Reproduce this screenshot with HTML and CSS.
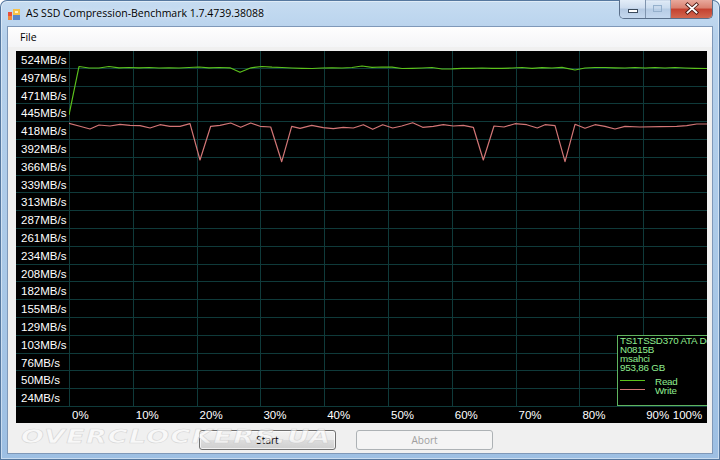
FILE: index.html
```html
<!DOCTYPE html>
<html lang="en">
<head>
    <meta charset="UTF-8">
    <title>AS SSD Compression-Benchmark</title>
    <link rel="stylesheet" href="styles.css">
</head>
<body>
    <div class="window">
        <div class="titlebar">
            <svg class="app-icon" width="12" height="12" viewBox="0 0 12 12">
                <rect x="0" y="3" width="4" height="4" fill="#e8503a"/>
                <rect x="0" y="7" width="4" height="4" fill="#f08a3c"/>
                <rect x="5" y="0" width="7" height="6" fill="#f6c14a"/>
                <rect x="5" y="6" width="7" height="5" fill="#5a86c8"/>
                <rect x="7" y="2" width="3" height="2" fill="#fff3c8"/>
            </svg>
            <span class="title">AS SSD Compression-Benchmark 1.7.4739.38088</span>
            <div class="caption-buttons">
                <span class="cap-btn cap-min">
                    <svg width="25" height="18" viewBox="0 0 25 18">
                        <rect x="8.5" y="9.5" width="9" height="3" fill="#fff" stroke="#3b4a5c"/>
                    </svg>
                </span>
                <span class="cap-btn cap-max">
                    <svg width="24" height="18" viewBox="0 0 24 18">
                        <rect x="7.5" y="5.5" width="8" height="6" fill="none" stroke="#8ea8c6"/>
                        <rect x="8" y="6" width="7" height="2" fill="#c9d9eb"/>
                    </svg>
                </span>
                <span class="cap-btn cap-close">
                    <svg width="41" height="18" viewBox="0 0 41 18">
                        <path d="M16.5 4.5 L25.5 12.5 M25.5 4.5 L16.5 12.5" stroke="#4a1a14" stroke-width="3.6" stroke-linecap="square"/>
                        <path d="M16.5 4.5 L25.5 12.5 M25.5 4.5 L16.5 12.5" stroke="#fff" stroke-width="1.8" stroke-linecap="square"/>
                    </svg>
                </span>
            </div>
        </div>

        <div class="client">
            <div class="menubar">
                <span class="menu-item">File</span>
            </div>

            <div class="chart">
                <div class="y-axis">
                    <div class="y-label">524MB/s</div>
                    <div class="y-label">497MB/s</div>
                    <div class="y-label">471MB/s</div>
                    <div class="y-label">445MB/s</div>
                    <div class="y-label">418MB/s</div>
                    <div class="y-label">392MB/s</div>
                    <div class="y-label">366MB/s</div>
                    <div class="y-label">339MB/s</div>
                    <div class="y-label">313MB/s</div>
                    <div class="y-label">287MB/s</div>
                    <div class="y-label">261MB/s</div>
                    <div class="y-label">234MB/s</div>
                    <div class="y-label">208MB/s</div>
                    <div class="y-label">182MB/s</div>
                    <div class="y-label">155MB/s</div>
                    <div class="y-label">129MB/s</div>
                    <div class="y-label">103MB/s</div>
                    <div class="y-label">76MB/s</div>
                    <div class="y-label">50MB/s</div>
                    <div class="y-label">24MB/s</div>
                </div>

                <div class="plot">
                    <svg class="plot-svg" width="638" height="356" viewBox="69 51 638 356">
                        <g class="grid" fill="#0f3a3a" shape-rendering="crispEdges">
                            <rect x="69" y="51" width="1" height="356"/>
                            <rect x="132.8" y="51" width="1" height="356"/>
                            <rect x="196.6" y="51" width="1" height="356"/>
                            <rect x="260.4" y="51" width="1" height="356"/>
                            <rect x="324.2" y="51" width="1" height="356"/>
                            <rect x="388" y="51" width="1" height="356"/>
                            <rect x="451.8" y="51" width="1" height="356"/>
                            <rect x="515.6" y="51" width="1" height="356"/>
                            <rect x="579.4" y="51" width="1" height="356"/>
                            <rect x="643.2" y="51" width="1" height="356"/>
                            <rect x="69" y="67.8" width="638" height="1"/>
                            <rect x="69" y="85.6" width="638" height="1"/>
                            <rect x="69" y="103.4" width="638" height="1"/>
                            <rect x="69" y="121.2" width="638" height="1"/>
                            <rect x="69" y="139" width="638" height="1"/>
                            <rect x="69" y="156.8" width="638" height="1"/>
                            <rect x="69" y="174.6" width="638" height="1"/>
                            <rect x="69" y="192.4" width="638" height="1"/>
                            <rect x="69" y="210.2" width="638" height="1"/>
                            <rect x="69" y="228" width="638" height="1"/>
                            <rect x="69" y="245.8" width="638" height="1"/>
                            <rect x="69" y="263.6" width="638" height="1"/>
                            <rect x="69" y="281.4" width="638" height="1"/>
                            <rect x="69" y="299.2" width="638" height="1"/>
                            <rect x="69" y="317" width="638" height="1"/>
                            <rect x="69" y="334.8" width="638" height="1"/>
                            <rect x="69" y="352.6" width="638" height="1"/>
                            <rect x="69" y="370.4" width="638" height="1"/>
                            <rect x="69" y="388.2" width="638" height="1"/>
                            <rect x="69" y="406" width="638" height="1"/>
                        </g>
                        <!-- write -->
                        <polyline class="line-write" points="69,123.3 79,126 90,129 99,125 110,126 120,124.3 130,125.3 140,125.7 150,128 160,124.7 170,126.3 180,126.3 190,123.7 200,160 210.7,126.3 220,125.3 230.7,123 240.7,127.3 250.7,123 260,126.3 270.7,127 281.7,161.7 291.7,126.3 300,128.3 311.7,125.3 323.3,127.7 333.3,128.7 343.3,127.3 353.3,128 363.3,124.7 372.7,129.3 382.7,124.7 392.7,128 401.7,126 412.7,122.7 422.7,127.3 433.3,126.3 443.3,124.7 453.3,126 463.3,125.3 473.3,127.3 483.3,160 494,126 504,127 515,123.7 526.7,124.7 537.3,128 545,124.7 555,125.7 565,161.7 575,124.3 585,128.3 595,124.7 605,126.3 615,129 625,126.3 640,127 660,126.7 676.7,126.3 686.7,125.7 696.7,124 707,124"/>
                        <!-- read -->
                        <polyline class="line-read" points="69,115 79,66.5 89,68 99,68 109,66.5 119,67.8 129,67.5 139,67.8 149,67.5 159,68 169,67.8 179,68 189,67.5 199,67 209,67.8 219,67.5 230,67.8 240,72.3 251,67.8 262,66.5 272,67.2 282,67.5 292,68 302,68.3 312,68.5 322,68 332,67.8 342,68 352,67.5 362,66 372,67.3 382,67 392,67.2 402,68.5 412,68.3 422,68 432,67.5 442,69 452,68.8 462,68.3 472,68.3 482,68 492,68.3 502,68.3 512,68 522,67.5 532,68.3 542,67.7 552,68 562,67.3 575,70 585,68 595,67.5 605,67.5 615,67.8 625,68 635,67.5 645,68 655,67.5 665,68 675,67.5 685,68 695,68.3 707,68.5"/>
                    </svg>

                    <div class="legend">
                        <div class="legend-text">TS1TSSD370 ATA Device</div>
                        <div class="legend-text">N0815B</div>
                        <div class="legend-text">msahci</div>
                        <div class="legend-text">953,86 GB</div>
                        <div class="legend-row legend-first">
                            <span class="swatch swatch-read"></span>
                            <span>Read</span>
                        </div>
                        <div class="legend-row">
                            <span class="swatch swatch-write"></span>
                            <span>Write</span>
                        </div>
                    </div>
                </div>

                <div class="x-axis">
                    <span class="x-label">0%</span>
                    <span class="x-label">10%</span>
                    <span class="x-label">20%</span>
                    <span class="x-label">30%</span>
                    <span class="x-label">40%</span>
                    <span class="x-label">50%</span>
                    <span class="x-label">60%</span>
                    <span class="x-label">70%</span>
                    <span class="x-label">80%</span>
                    <span class="x-label x-label-last">90%<span class="x-end">100%</span></span>
                </div>
            </div>

            <div class="actions">
                <button class="btn" type="button">Start</button>
                <button class="btn" type="button" disabled>Abort</button>
            </div>
        </div>

        <div class="watermark">OVERCLOCKERS.UA</div>
    </div>
</body>
</html>
```

FILE: styles.css
```css
body {
    margin: 0;
    font-family: "Liberation Sans", Arial, sans-serif;
    background: #ffffff;
}

.window {
    position: relative;
    width: 720px;
    height: 460px;
    box-sizing: border-box;
    padding: 0 7px 6px;
    display: flex;
    flex-direction: column;
    overflow: hidden;
    background: linear-gradient(to bottom, #c6dcf1 0%, #b6d1ec 8%, #a9c8e7 60%, #9dbfe3 100%);
    border-radius: 7px 7px 0 0;
    box-shadow: inset 0 0 0 1px #56789f, inset 0 0 0 2px rgba(255, 255, 255, 0.45);
}

/* title bar */

.titlebar {
    height: 26px;
    display: flex;
    align-items: center;
}

.app-icon {
    align-self: flex-start;
    margin: 9px 6px 0 1px;
}

.title {
    font-family: "Open Sans", "Noto Sans", sans-serif;
    font-size: 10.5px;
    color: #000;
    text-shadow: 0 0 6px rgba(255, 255, 255, 0.9);
}

.caption-buttons {
    align-self: flex-start;
    margin-left: auto;
    display: flex;
    height: 18px;
    border: 1px solid #5a6f8a;
    border-top: none;
    border-radius: 0 0 5px 5px;
    overflow: hidden;
}

.cap-btn {
    display: block;
    height: 18px;
}

.cap-btn svg {
    display: block;
}

.cap-min,
.cap-max {
    background: linear-gradient(to bottom, #e3edf8 0%, #cddcee 45%, #b4c9e2 50%, #c5d8ee 100%);
    border-right: 1px solid #7f94ae;
}

.cap-max {
    opacity: 0.85;
}

.cap-close {
    background: linear-gradient(to bottom, #e8a99c 0%, #d9806f 45%, #c4412f 50%, #d2674f 100%);
}

/* client area */

.client {
    flex: 1;
    display: flex;
    flex-direction: column;
    background: #f0f0f0;
    border: 1px solid #7f98b8;
}

.menubar {
    height: 20px;
    display: flex;
    align-items: center;
    background: linear-gradient(to bottom, #fefefe, #f4f5f7);
}

.menu-item {
    font-family: "Open Sans", "Noto Sans", sans-serif;
    font-size: 10.5px;
    color: #000;
    padding-left: 12px;
}

/* chart */

.chart {
    width: 691px;
    height: 372px;
    margin: 4px 0 0 8px;
    background: #000;
    display: grid;
    grid-template-columns: 53px 638px;
    grid-template-rows: 356px 16px;
    color: #fff;
    font-size: 11.5px;
}

.y-label {
    height: 17.8px;
    box-sizing: border-box;
    border-bottom: 1px solid #0f3a3a;
    padding: 2px 0 0 5px;
    line-height: 15.8px;
    white-space: nowrap;
}

.plot {
    position: relative;
    overflow: hidden;
}

.plot-svg {
    display: block;
}

.line-read,
.line-write {
    fill: none;
    stroke-width: 1.2;
    stroke-linejoin: round;
}

.line-read {
    stroke: #5cc21c;
}

.line-write {
    stroke: #d27676;
}

.legend {
    position: absolute;
    left: 548px;
    top: 284px;
    width: 120px;
    height: 69px;
    border: 1px solid #5fb45f;
    background: #000;
    color: #90ee90;
    font-size: 9.8px;
    letter-spacing: -0.2px;
    padding-left: 2px;
}

.legend-text {
    line-height: 9px;
    white-space: nowrap;
}

.legend-row {
    display: flex;
    align-items: center;
    height: 9px;
    line-height: 9px;
}

.legend-first {
    margin-top: 5px;
}

.swatch {
    width: 25px;
    height: 1px;
    margin-right: 10px;
    position: relative;
    top: -1px;
}

.swatch-read {
    background: #5cc21c;
}

.swatch-write {
    background: #d27676;
}

.x-axis {
    grid-column: 2;
    grid-row: 2;
    display: flex;
    line-height: 17px;
}

.x-label {
    width: 63.8px;
    flex: none;
    box-sizing: border-box;
    padding-left: 3px;
}

.x-label-last {
    width: 64px;
    display: flex;
    padding-right: 5px;
}

.x-end {
    margin-left: auto;
}

/* buttons */

.actions {
    display: flex;
    gap: 20px;
    padding-left: 191px;
    margin-top: 7px;
}

.btn {
    width: 137px;
    height: 20px;
    padding: 0;
    font-family: "Open Sans", "Noto Sans", sans-serif;
    font-size: 10px;
    color: #000;
    border: 1px solid #707070;
    border-radius: 3px;
    background: linear-gradient(to bottom, #f2f2f2 0%, #ebebeb 50%, #dddddd 50%, #cfcfcf 100%);
    box-shadow: inset 0 0 0 1px rgba(255, 255, 255, 0.7);
}

.btn:disabled {
    color: #a0a0a0;
    border-color: #adb2b5;
    background: #f4f4f4;
    box-shadow: none;
}

/* site watermark */

.watermark {
    position: absolute;
    left: 21px;
    top: 424px;
    font-family: "DejaVu Sans", sans-serif;
    font-weight: bold;
    font-style: italic;
    font-size: 20px;
    letter-spacing: 1px;
    transform: scaleX(1.34);
    transform-origin: left center;
    color: rgba(255, 255, 255, 0.6);
    -webkit-text-stroke: 0.6px rgba(190, 190, 190, 0.55);
    pointer-events: none;
    white-space: nowrap;
}
```
